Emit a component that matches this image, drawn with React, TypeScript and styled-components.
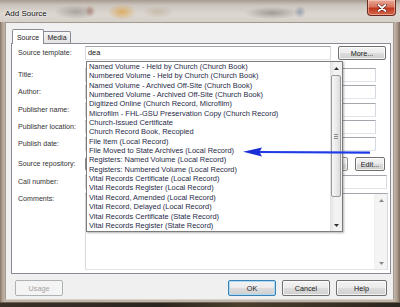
import React from "react";
import styled, { createGlobalStyle, css } from "styled-components";

const FONT = `"Liberation Sans", Arial, sans-serif`;

const Global = createGlobalStyle`
  html, body { margin: 0; padding: 0; background: #2f2a24; }
  body { width: 400px; height: 307px; overflow: hidden; font-family: ${FONT}; }
  * { box-sizing: border-box; }
`;

const Window = styled.div`
  position: relative;
  width: 400px;
  height: 307px;
  overflow: hidden;
  display: flex;
  flex-direction: column;
  background: linear-gradient(to right, #3a3128, #2b2620 40%, #4a3f2c 60%, #2b2620);
`;

const Frame = styled.div`
  height: 303px;
  flex: none;
  display: flex;
  flex-direction: column;
  background: linear-gradient(
    to right,
    #857366 0,
    #ad9d8f 2px,
    #c2b6aa 5px,
    #c2b6aa 394px,
    #ae9e90 397px,
    #7d6b5e 400px
  );
  border-bottom: 1px solid #6e6054;
`;

const TitleBar = styled.div`
  height: 22px;
  flex: none;
  display: flex;
  justify-content: space-between;
  align-items: flex-start;
  padding: 0 4px 0 5px;
  background:
    radial-gradient(ellipse 22px 7px at 76px 12px, rgba(115, 105, 100, 0.45), transparent),
    radial-gradient(ellipse 5px 6px at 90px 11px, rgba(150, 80, 60, 0.5), transparent),
    radial-gradient(ellipse 14px 8px at 122px 12px, rgba(222, 160, 70, 0.75), transparent),
    radial-gradient(ellipse 16px 6px at 158px 12px, rgba(170, 150, 120, 0.4), transparent),
    radial-gradient(ellipse 28px 6px at 272px 13px, rgba(90, 85, 80, 0.45), transparent),
    radial-gradient(ellipse 6px 6px at 300px 12px, rgba(90, 110, 150, 0.5), transparent),
    linear-gradient(to bottom, #a69a8f 0, #cbc4bc 5px, #dcd7d1 14px, #d6d0c9 22px);
`;

const TitleText = styled.span`
  margin-top: 10px;
  font-size: 8px;
  line-height: 8px;
  color: #151515;
  text-shadow: 0 0 3px #fff, 0 0 5px rgba(255, 255, 255, 0.8);
`;

const CloseButton = styled.div`
  width: 29px;
  height: 16px;
  display: flex;
  align-items: center;
  justify-content: center;
  border: 1px solid #6b2a1e;
  border-top: none;
  border-radius: 0 0 4px 4px;
  background: linear-gradient(to bottom, #e9a999 0, #d8735e 45%, #c0391f 55%, #d5664a 100%);
  box-shadow: inset 0 0 0 1px rgba(255, 220, 210, 0.5);
`;

const Client = styled.div`
  margin: 0 6px 0 5px;
  height: 278px;
  flex: none;
  background: #f0f0f0;
  border: 1px solid #a29a91;
  border-bottom-color: #d8d2cc;
  padding: 6px 3px 0 5px;
  display: flex;
  flex-direction: column;
`;

const TabStrip = styled.div`
  height: 14px;
  flex: none;
  display: flex;
  align-items: flex-end;
  padding-left: 1px;
`;

const Tab = styled.div<{ $active?: boolean; $w: number }>`
  width: ${(p) => p.$w}px;
  display: flex;
  align-items: center;
  justify-content: center;
  font-size: 7px;
  color: #222;
  border: 1px solid #898c95;
  border-bottom: none;
  ${(p) =>
    p.$active
      ? css`
          height: 15px;
          margin-bottom: -1px;
          background: #fff;
          position: relative;
          z-index: 1;
          border-radius: 2px 2px 0 0;
        `
      : css`
          height: 12px;
          border-left: none;
          background: linear-gradient(to bottom, #f5f5f5, #e3e3e3);
          border-radius: 0 2px 0 0;
        `}
`;

const Panel = styled.div`
  width: 380px;
  height: 231px;
  flex: none;
  background: #fff;
  border: 1px solid #898c95;
  padding: 2px 0 0 6px;
  display: flex;
  flex-direction: column;
`;

const FormRow = styled.div<{ $mt: number; $h?: number }>`
  margin-top: ${(p) => p.$mt}px;
  height: ${(p) => p.$h ?? 14}px;
  flex: none;
  display: grid;
  grid-template-columns: 67px 1fr;
  align-items: center;
`;

const Label = styled.span<{ $top?: boolean }>`
  font-size: 7.1px;
  color: #333;
  white-space: nowrap;
  ${(p) =>
    p.$top &&
    css`
      align-self: start;
      margin-top: 2px;
    `}
`;

const Fields = styled.div<{ $pr: number; $gap?: number }>`
  height: 100%;
  display: flex;
  gap: ${(p) => p.$gap ?? 0}px;
  padding-right: ${(p) => p.$pr}px;
`;

const TextBox = styled.div`
  flex: 1;
  height: 14px;
  border: 1px solid;
  border-color: #a3a6ad #d6d9df #e1e5ea #d6d9df;
  background: #fff;
  font-size: 7.4px;
  line-height: 12px;
  padding-left: 2px;
  color: #111;
`;

const ComboBox = styled.div`
  flex: 1;
  height: 14px;
  border: 1px solid #8d8d8d;
  border-radius: 2px;
  background: linear-gradient(to bottom, #f3f3f3 0, #ebebeb 50%, #dddddd 50%, #cfcfcf 100%);
  box-shadow: inset 0 0 0 1px rgba(255, 255, 255, 0.7);
`;

const TextArea = styled.div`
  flex: 1;
  height: 100%;
  display: flex;
  border: 1px solid;
  border-color: #a3a6ad #d6d9df #e1e5ea #d6d9df;
  background: #fff;
`;

const AreaBody = styled.div`
  flex: 1;
`;

const Button = styled.div<{ $w: number; $h?: number; $kind?: "primary" | "disabled" }>`
  width: ${(p) => p.$w}px;
  height: ${(p) => p.$h ?? 14}px;
  flex: none;
  display: flex;
  align-items: center;
  justify-content: center;
  font-size: 7.2px;
  color: #1a1a1a;
  border: 1px solid #707070;
  border-radius: 2px;
  background: linear-gradient(to bottom, #f3f3f3 0, #ebebeb 50%, #dddddd 50%, #cfcfcf 100%);
  box-shadow: inset 0 0 0 1px rgba(255, 255, 255, 0.75);
  ${(p) =>
    p.$kind === "primary" &&
    css`
      border-color: #3c7fb1;
      box-shadow: inset 0 0 0 1px #a6dcf7;
    `}
  ${(p) =>
    p.$kind === "disabled" &&
    css`
      border-color: #adb2b5;
      background: #f4f4f4;
      color: #a3a3a3;
      box-shadow: none;
    `}
`;

const ButtonBar = styled.div`
  margin-top: 6px;
  height: 16px;
  flex: none;
  display: flex;
  align-items: center;
  gap: 6px;
  padding: 0 3px 0 4px;
`;

const Spacer = styled.div`
  flex: 1;
`;

const DropList = styled.div`
  position: absolute;
  left: 86px;
  top: 61px;
  width: 257px;
  height: 171px;
  z-index: 5;
  display: flex;
  background: #fff;
  border: 1px solid #7c7c7c;
  box-shadow: 1px 1px 2px rgba(0, 0, 0, 0.3);
`;

const Items = styled.ul`
  list-style: none;
  margin: 0;
  padding: 0 0 0 2px;
  flex: 1;
  overflow: hidden;
`;

const Item = styled.li`
  height: 9.35px;
  line-height: 9.35px;
  font-size: 7.45px;
  color: #1f2a48;
  white-space: nowrap;
`;

const ScrollBar = styled.div<{ $w: number; $disabled?: boolean }>`
  width: ${(p) => p.$w}px;
  flex: none;
  display: flex;
  flex-direction: column;
  background: ${(p) =>
    p.$disabled ? "#f4f4f4" : "linear-gradient(to right, #e6e6e6, #f4f4f4 40%, #f0f0f0)"};
  border-left: 1px solid ${(p) => (p.$disabled ? "#f0f0f0" : "#e2e2e2")};
`;

const ArrowBox = styled.div`
  height: 12px;
  flex: none;
  display: flex;
  align-items: center;
  justify-content: center;
`;

const Thumb = styled.div`
  margin: 1px 1px 0 0;
  height: 122px;
  flex: none;
  display: flex;
  flex-direction: column;
  align-items: center;
  justify-content: center;
  gap: 1px;
  border: 1px solid #9a9a9a;
  border-radius: 2px;
  background: linear-gradient(to right, #f6f6f6, #ececec 50%, #dadada);
`;

const Grip = styled.span`
  width: 4px;
  height: 1px;
  background: #8a8a8a;
`;

const Track = styled.div`
  flex: 1;
`;

const ArrowOverlay = styled.svg`
  position: absolute;
  left: 0;
  top: 0;
  z-index: 10;
  pointer-events: none;
`;

const Below = styled.div`
  flex: 1;
`;

function Tri({ up, color = "#333" }: { up?: boolean; color?: string }) {
  return (
    <svg width="5" height="3" viewBox="0 0 5 3">
      <path d={up ? "M0 3 L2.5 0 L5 3 Z" : "M0 0 L5 0 L2.5 3 Z"} fill={color} />
    </svg>
  );
}

const ITEMS = [
  "Named Volume - Held by Church (Church Book)",
  "Numbered Volume - Held by Church (Church Book)",
  "Named Volume - Archived Off-Site (Church Book)",
  "Numbered Volume - Archived Off-Site (Church Book)",
  "Digitized Online (Church Record, Microfilm)",
  "Microfilm - FHL-GSU Preservation Copy (Church Record)",
  "Church-Issued Certificate",
  "Church Record Book, Recopied",
  "File Item (Local Record)",
  "File Moved to State Archives (Local Record)",
  "Registers: Named Volume (Local Record)",
  "Registers: Numbered Volume (Local Record)",
  "Vital Records Certificate (Local Record)",
  "Vital Records Register (Local Record)",
  "Vital Record, Amended (Local Record)",
  "Vital Record, Delayed (Local Record)",
  "Vital Records Certificate (State Record)",
  "Vital Records Register (State Record)",
];

const PLAIN_ROWS: { label: string; mt: number }[] = [
  { label: "Title:", mt: 8 },
  { label: "Author:", mt: 3 },
  { label: "Publisher name:", mt: 4 },
  { label: "Publisher location:", mt: 3 },
  { label: "Publish date:", mt: 3 },
];

export default function App() {
  return (
    <Window>
      <Global />
      <Frame>
        <TitleBar>
          <TitleText>Add Source</TitleText>
          <CloseButton>
            <svg width="10" height="8" viewBox="0 0 10 8">
              <path d="M1.5 1 L8.5 7 M8.5 1 L1.5 7" stroke="#5a1a10" strokeWidth="3" strokeLinecap="round" />
              <path d="M1.5 1 L8.5 7 M8.5 1 L1.5 7" stroke="#fff" strokeWidth="1.8" strokeLinecap="round" />
            </svg>
          </CloseButton>
        </TitleBar>
        <Client>
          <TabStrip>
            <Tab $active $w={32}>Source</Tab>
            <Tab $w={27}>Media</Tab>
          </TabStrip>
          <Panel>
            <FormRow $mt={0}>
              <Label>Source template:</Label>
              <Fields $pr={4} $gap={7}>
                <TextBox>dea</TextBox>
                <Button $w={48}>More...</Button>
              </Fields>
            </FormRow>
            {PLAIN_ROWS.map((r) => (
              <FormRow key={r.label} $mt={r.mt}>
                <Label>{r.label}</Label>
                <Fields $pr={14}>
                  <TextBox />
                </Fields>
              </FormRow>
            ))}
            <FormRow $mt={6}>
              <Label>Source repository:</Label>
              <Fields $pr={5} $gap={7}>
                <ComboBox />
                <Button $w={30}>Edit...</Button>
              </Fields>
            </FormRow>
            <FormRow $mt={4}>
              <Label>Call number:</Label>
              <Fields $pr={3}>
                <TextBox />
              </Fields>
            </FormRow>
            <FormRow $mt={4} $h={77}>
              <Label $top>Comments:</Label>
              <Fields $pr={2}>
                <TextArea>
                  <AreaBody />
                  <ScrollBar $w={13} $disabled>
                    <ArrowBox>
                      <Tri up color="#8a8a8a" />
                    </ArrowBox>
                    <Track />
                    <ArrowBox>
                      <Tri color="#8a8a8a" />
                    </ArrowBox>
                  </ScrollBar>
                </TextArea>
              </Fields>
            </FormRow>
          </Panel>
          <ButtonBar>
            <Button $w={48} $h={16} $kind="disabled">
              Usage
            </Button>
            <Spacer />
            <Button $w={48} $h={16} $kind="primary">
              OK
            </Button>
            <Button $w={48} $h={16}>
              Cancel
            </Button>
            <Button $w={51} $h={16}>
              Help
            </Button>
          </ButtonBar>
        </Client>
      </Frame>
      <Below />

      <DropList>
        <Items>
          {ITEMS.map((t) => (
            <Item key={t}>{t}</Item>
          ))}
        </Items>
        <ScrollBar $w={12}>
          <ArrowBox>
            <Tri up />
          </ArrowBox>
          <Thumb>
            <Grip />
            <Grip />
            <Grip />
          </Thumb>
          <Track />
          <ArrowBox>
            <Tri />
          </ArrowBox>
        </ScrollBar>
      </DropList>

      <ArrowOverlay width="400" height="307" viewBox="0 0 400 307">
        <path d="M259 152 L370 152.6" stroke="#1d3be6" strokeWidth="2.2" />
        <path d="M243 151.8 L262 147.4 L259.5 151.9 L262 156.4 Z" fill="#1a2fd6" />
      </ArrowOverlay>
    </Window>
  );
}
